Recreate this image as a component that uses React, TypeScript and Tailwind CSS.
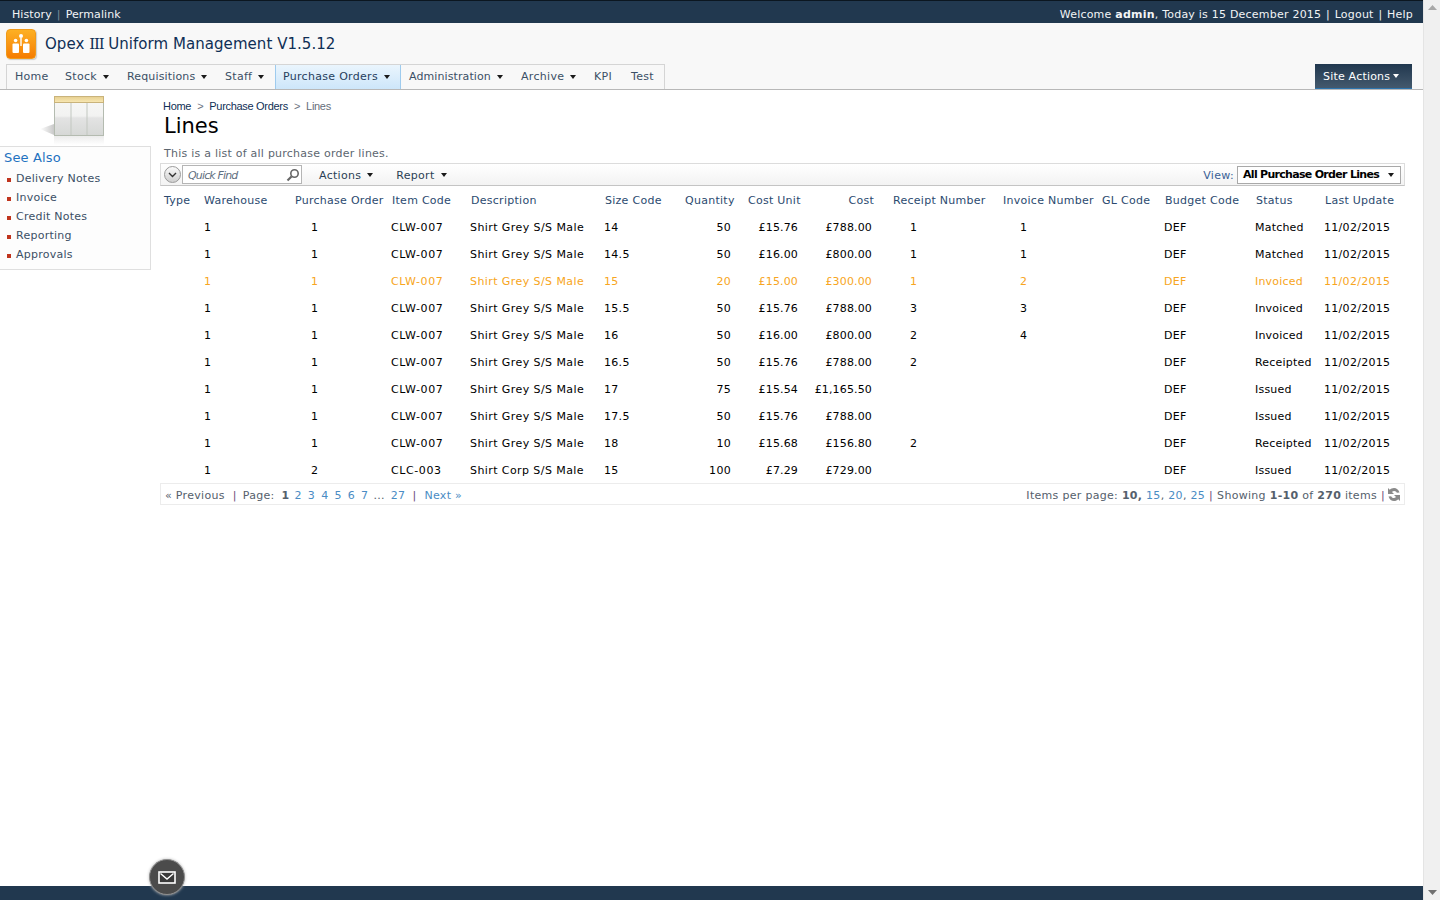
const navItems = [
  { label: 'Home', arrow: false, w: 'w-[50px]', t: '' },
  { label: 'Stock', arrow: true, w: 'w-[62px]', t: '' },
  { label: 'Requisitions', arrow: true, w: 'w-[98px]', t: 'tracking-[0.15px]' },
  { label: 'Staff', arrow: true, w: 'w-[58px]', t: '' },
  { label: 'Purchase Orders', arrow: true, w: 'w-[126px]', t: '', active: true },
  { label: 'Administration', arrow: true, w: 'w-[112px]', t: 'tracking-[0.1px]' },
  { label: 'Archive', arrow: true, w: 'w-[73px]', t: '' },
  { label: 'KPI', arrow: false, w: 'w-[37px]', t: '' },
  { label: 'Test', arrow: false, w: 'w-[41px]', t: '' },
];

const seeAlso = ['Delivery Notes', 'Invoice', 'Credit Notes', 'Reporting', 'Approvals'];

const headers = [
  'Type', 'Warehouse', 'Purchase Order', 'Item Code', 'Description', 'Size Code', 'Quantity', 'Cost Unit', 'Cost',
  'Receipt Number', 'Invoice Number', 'GL Code', 'Budget Code', 'Status', 'Last Update',
];

const rows = [
  ['1', '1', 'Shirt Grey S/S Male', 'CLW-007', '14', '50', '£15.76', '£788.00', '1', '1', 'Matched'],
  ['1', '1', 'Shirt Grey S/S Male', 'CLW-007', '14.5', '50', '£16.00', '£800.00', '1', '1', 'Matched'],
  ['1', '1', 'Shirt Grey S/S Male', 'CLW-007', '15', '20', '£15.00', '£300.00', '1', '2', 'Invoiced'],
  ['1', '1', 'Shirt Grey S/S Male', 'CLW-007', '15.5', '50', '£15.76', '£788.00', '3', '3', 'Invoiced'],
  ['1', '1', 'Shirt Grey S/S Male', 'CLW-007', '16', '50', '£16.00', '£800.00', '2', '4', 'Invoiced'],
  ['1', '1', 'Shirt Grey S/S Male', 'CLW-007', '16.5', '50', '£15.76', '£788.00', '2', '', 'Receipted'],
  ['1', '1', 'Shirt Grey S/S Male', 'CLW-007', '17', '75', '£15.54', '£1,165.50', '', '', 'Issued'],
  ['1', '1', 'Shirt Grey S/S Male', 'CLW-007', '17.5', '50', '£15.76', '£788.00', '', '', 'Issued'],
  ['1', '1', 'Shirt Grey S/S Male', 'CLW-007', '18', '10', '£15.68', '£156.80', '2', '', 'Receipted'],
  ['1', '2', 'Shirt Corp S/S Male', 'CLC-003', '15', '100', '£7.29', '£729.00', '', '', 'Issued'],
];

const colWidths = [40, 91, 97, 79, 134, 80, 63, 66, 79, 110, 99, 63, 91, 69, 84];

function Arrow() {
  return (
    <svg width="6" height="4" viewBox="0 0 6 4" className="ml-[6px] inline-block align-[2px]">
      <path d="M0 0h6L3 4z" fill="#1a1a1a" />
    </svg>
  );
}

function Logo() {
  return (
    <div className="w-[30px] h-[30px] rounded-[4px] bg-gradient-to-b from-[#fdb022] to-[#f57c00] border border-[#f09a1a] flex items-center justify-center shadow-[1px_1px_1px_#ccc]">
      <svg width="20" height="22" viewBox="0 0 20 22">
        <circle cx="10" cy="3" r="2" fill="#fff" />
        <circle cx="4.6" cy="7.5" r="1.8" fill="#fff" />
        <circle cx="15.4" cy="7.5" r="1.8" fill="#fff" />
        <rect x="9.3" y="5" width="1.4" height="8" fill="#fff" />
        <rect x="1.5" y="10.5" width="6.5" height="9.5" rx="1" fill="#fff" />
        <rect x="12" y="10.5" width="6.5" height="9.5" rx="1" fill="#fff" />
      </svg>
    </div>
  );
}

function ListIcon() {
  return (
    <svg width="68" height="50" viewBox="0 0 68 50">
      <defs>
        <linearGradient id="pane" x1="0" y1="0" x2="0" y2="1">
          <stop offset="0" stopColor="#f8f8f7" />
          <stop offset="0.5" stopColor="#f2f2f1" />
          <stop offset="0.55" stopColor="#e3e3e3" />
          <stop offset="1" stopColor="#d6d8d6" />
        </linearGradient>
        <linearGradient id="head" x1="0" y1="0" x2="0" y2="1">
          <stop offset="0" stopColor="#e6cf8f" />
          <stop offset="1" stopColor="#f9e8b4" />
        </linearGradient>
        <linearGradient id="cast" x1="1" y1="0" x2="0" y2="0">
          <stop offset="0" stopColor="#c9c9c9" />
          <stop offset="1" stopColor="#ffffff" />
        </linearGradient>
        <linearGradient id="mirror" x1="0" y1="0" x2="0" y2="1">
          <stop offset="0" stopColor="#ececec" />
          <stop offset="1" stopColor="#ffffff" />
        </linearGradient>
      </defs>
      <path d="M2 33 L16 28 V39 Z" fill="url(#cast)" />
      <rect x="16" y="40" width="50" height="9" fill="url(#mirror)" />
      <rect x="16.5" y="0.5" width="49" height="39" fill="url(#pane)" stroke="#b4bbb0" />
      <rect x="16.5" y="0.5" width="49" height="6" fill="url(#head)" stroke="#c9b37b" />
      <path d="M33 7V39M49 7V39" stroke="#c2c7c0" />
    </svg>
  );
}

export default function App() {
  return (
    <div className="h-screen w-full overflow-hidden flex bg-white text-[11px] tracking-[0.3px] text-black font-['DejaVu_Sans','Liberation_Sans',sans-serif]">
      <div className="relative flex-1 min-w-0 flex flex-col">
        {/* Top bar */}
        <div className="h-[23px] shrink-0 bg-[#21384f] border-t border-[#0b1620] flex items-center justify-between pt-[7px] pl-3 pr-[10px] text-[#f2f4f6]">
          <div className="flex items-center tracking-[0.1px]">
            <span>History</span>
            <span className="mx-[5px] text-[#7f8d9b]">|</span>
            <span>Permalink</span>
          </div>
          <div className="tracking-[0.22px]">
            Welcome <b>admin</b>, Today is 15 December 2015 <span className="mx-[1px]">|</span> Logout <span className="mx-[1px]">|</span> Help
          </div>
        </div>

        {/* Title */}
        <div className="h-[41px] shrink-0 bg-[#f8f8f8] flex items-center pl-[6px]">
          <Logo />
          <span className="ml-[9px] mt-[1px] text-[15px] tracking-[0.05px] text-[#0f2f55]">
            Opex <span className="font-['DejaVu_Serif',serif] tracking-[-1.2px]">III</span> Uniform Management V1.5.12
          </span>
        </div>

        {/* Nav */}
        <div className="h-[26px] shrink-0 bg-[#f8f8f8] border-b border-[#b8b8b8] pl-[6px] pr-[11px] flex items-end justify-between">
          <div className="flex h-[25px] border-l border-t border-r border-[#d5d5d5] bg-[#f8f8f8] text-[#3b4f65]">
            {navItems.map((item) => (
              <div
                key={item.label}
                className={`${item.w} ${item.t} shrink-0 flex items-center ${item.active ? 'pl-[7px] bg-gradient-to-b from-[#eaf5fd] to-[#cde6fa] border-x border-[#9ecbee] text-[#27405c]' : 'pl-2'}`}
              >
                {item.label}
                {item.arrow && <Arrow />}
              </div>
            ))}
          </div>
          <div className="w-[97px] h-[25px] pt-[2px] bg-gradient-to-b from-[#21384f] to-[#44596d] border-b border-[#2c74ad] text-white flex items-center pl-2 tracking-[0.2px]">
            Site Actions
            <svg width="6" height="4" viewBox="0 0 6 4" className="ml-[3px] mb-[3px]">
              <path d="M0 0h6L3 4z" fill="#ffffff" />
            </svg>
          </div>
        </div>

        {/* Body */}
        <div className="flex-1 min-h-0 flex">
          {/* Sidebar */}
          <div className="w-[151px] shrink-0">
            <div className="h-[56px] pl-[38px] pt-[6px]">
              <ListIcon />
            </div>
            <div className="h-[124px] border-t border-r border-b border-[#dfdfdf] bg-[#fdfdfd] pl-1 pt-[3px]">
              <div className="text-[13px] leading-[16px] tracking-[0.15px] text-[#1f72c0]">See Also</div>
              <ul className="mt-[4px] tracking-[0.25px]">
                {seeAlso.map((link) => (
                  <li key={link} className="h-[19px] flex items-center text-[#3b4f65]">
                    <span className="w-[4px] h-[4px] bg-[#c0341d] ml-[3px] mr-[5px]" />
                    {link}
                  </li>
                ))}
              </ul>
            </div>
          </div>

          {/* Content */}
          <div className="flex-1 min-w-0 pl-[9px] pr-[18px]">
            <div className="pl-[3px] pt-[8px] h-[16px] box-content flex items-center font-['Liberation_Sans',sans-serif] text-[#0f2f55] tracking-[-0.3px] text-[11px]">
              <span>Home</span>
              <span className="mx-[6px] text-[#6b7280]">&gt;</span>
              <span>Purchase Orders</span>
              <span className="mx-[6px] text-[#6b7280]">&gt;</span>
              <span className="text-[#666e7a]">Lines</span>
            </div>
            <div className="pl-[4px] text-[21px] tracking-normal leading-[24px] h-[24px]">Lines</div>
            <div className="pl-[4px] mt-[9px] h-[13px] leading-[13px] tracking-[0.24px] text-[#5c6670]">This is a list of all purchase order lines.</div>

            {/* Toolbar */}
            <div className="mt-[3px] h-[23px] border border-[#dcdcdc] border-b-[#c4c4c4] bg-gradient-to-b from-white to-[#f3f3f3] flex items-center pl-[3px] pr-[3px]">
              <div className="w-[17px] h-[17px] rounded-full border border-[#9a9a9a] bg-gradient-to-b from-[#fafafa] to-[#cfcfcf] flex items-center justify-center">
                <svg width="9" height="6" viewBox="0 0 9 6">
                  <path d="M1 1l3.5 3.5L8 1" fill="none" stroke="#333" strokeWidth="1.4" />
                </svg>
              </div>
              <div className="ml-[1px] w-[120px] h-[19px] bg-white border border-[#b5b5b5] flex items-center justify-between pl-[5px] pr-[1px] italic text-[#5f6f80] tracking-[-0.85px]">
                <span className="mt-[3px]">Quick Find</span>
                <svg width="14" height="14" viewBox="0 0 14 14">
                  <circle cx="8.5" cy="5.5" r="3.7" fill="#fff" stroke="#666" strokeWidth="1.6" />
                  <path d="M5.5 8.5L1.5 12.5" stroke="#666" strokeWidth="2.2" />
                </svg>
              </div>
              <span className="ml-[17px] mt-[3px] text-[#2b3f55]">Actions<Arrow /></span>
              <span className="ml-[23px] mt-[3px] text-[#2b3f55]">Report<Arrow /></span>
              <span className="ml-auto mt-[3px] text-[#3a5f96]">View:</span>
              <div className="ml-[3px] w-[164px] h-[18px] bg-white border border-[#a9a9a9] flex items-center justify-between pl-[5px] pr-[6px] font-bold tracking-[-0.7px] text-black">
                <span className="mt-[2px]">All Purchase Order Lines</span>
                <svg width="6" height="4" viewBox="0 0 6 4">
                  <path d="M0 0h6L3 4z" fill="#1a1a1a" />
                </svg>
              </div>
            </div>

            {/* Table */}
            <table className="table-fixed border-collapse w-[1245px]">
              <colgroup>
                {colWidths.map((w, i) => (
                  <col key={i} style={{ width: w }} />
                ))}
              </colgroup>
              <thead>
                <tr className="h-[27px] text-[#2b4a6f] tracking-[0.27px]">
                  {headers.map((h, i) => (
                    <th
                      key={h}
                      className={`font-normal whitespace-nowrap pt-[4px] ${i === 8 ? 'text-right pr-[15px]' : 'text-left pl-[4px]'}`}
                    >
                      {h}
                    </th>
                  ))}
                </tr>
              </thead>
              <tbody>
                {rows.map((r, idx) => (
                  <tr key={idx} className={`h-[27px] ${idx === 2 ? 'text-[#f7a521]' : 'text-black'}`}>
                    <td />
                    <td className="pl-[4px] pt-[3px]">{r[0]}</td>
                    <td className="pl-[20px] pt-[3px]">{r[1]}</td>
                    <td className="pl-[3px] pt-[3px] tracking-[0.6px]">{r[3]}</td>
                    <td className="pl-[3px] pt-[3px] tracking-[0.42px] whitespace-nowrap">{r[2]}</td>
                    <td className="pl-[3px] pt-[3px]">{r[4]}</td>
                    <td className="text-right pr-[13px] pt-[3px]">{r[5]}</td>
                    <td className="text-right pr-[12px] pt-[3px] tracking-[0.15px]">{r[6]}</td>
                    <td className="text-right pr-[17px] pt-[3px] tracking-[0.15px] whitespace-nowrap">{r[7]}</td>
                    <td className="pl-[21px] pt-[3px]">{r[8]}</td>
                    <td className="pl-[21px] pt-[3px]">{r[9]}</td>
                    <td />
                    <td className="pl-[3px] pt-[3px]">DEF</td>
                    <td className="pl-[3px] pt-[3px] tracking-[0.2px] whitespace-nowrap">{r[10]}</td>
                    <td className="pl-[3px] pt-[3px]">11/02/2015</td>
                  </tr>
                ))}
              </tbody>
            </table>

            {/* Pager */}
            <div className="h-[22px] pt-[4px] border border-[#ececec] flex items-center justify-between pl-[4px] pr-[3px] text-[#55606c]">
              <div className="flex items-center whitespace-pre">
                <span>« Previous</span>
                <span className="ml-[8px] mr-[6px] text-[#6b4a7a]">|</span>
                <span>Page:</span>
                <b className="ml-[7px]">1</b>
                <span className="ml-[5px] text-[#4a8cc4]">2</span>
                <span className="ml-[6px] text-[#4a8cc4]">3</span>
                <span className="ml-[6px] text-[#4a8cc4]">4</span>
                <span className="ml-[6px] text-[#4a8cc4]">5</span>
                <span className="ml-[6px] text-[#4a8cc4]">6</span>
                <span className="ml-[6px] text-[#4a8cc4]">7</span>
                <span className="ml-[5px]">...</span>
                <span className="ml-[6px] text-[#4a8cc4]">27</span>
                <span className="ml-[7px] mr-[8px] text-[#6b4a7a]">|</span>
                <span className="text-[#4a8cc4]">Next »</span>
              </div>
              <div className="flex items-center whitespace-pre">
                <span>Items per page: </span>
                <b>10,</b>
                <span> </span>
                <span className="text-[#4a8cc4]">15</span>,<span> </span>
                <span className="text-[#4a8cc4]">20</span>,<span> </span>
                <span className="text-[#4a8cc4]">25</span>
                <span className="mx-[4px] text-[#6b4a7a]">|</span>
                <span>Showing </span>
                <b>1-10</b>
                <span> of </span>
                <b>270</b>
                <span> items</span>
                <span className="ml-[4px] mr-[2px] text-[#6b4a7a]">|</span>
                <svg width="14" height="17" viewBox="0 0 14 17" className="mt-[-4px]">
                  <path d="M12.5 6.5C11.5 3.5 9.5 2 7 2 5.2 2 3.8 2.8 2.8 3.8L1 2v6h6L5 6C5.6 5.3 6.3 5 7.2 5c1.3 0 2.2.7 2.6 1.8z" fill="#8a8a8a" />
                  <path d="M1.5 10.5C2.5 13.5 4.5 15 7 15c1.8 0 3.2-.8 4.2-1.8L13 15V9H7l2 2c-.6.7-1.3 1-2.2 1-1.3 0-2.2-.7-2.6-1.8z" fill="#8a8a8a" />
                </svg>
              </div>
            </div>
          </div>
        </div>

        {/* Footer */}
        <div className="h-[14px] shrink-0 bg-[#21384f]" />

        {/* Mail button */}
        <div className="absolute left-[149px] top-[859px] w-[36px] h-[36px] rounded-full bg-[#4b4b4b] border border-[#8f8f8f] shadow-[0_0_3px_#bbb] flex items-center justify-center">
          <svg width="18" height="13" viewBox="0 0 18 13">
            <rect x="1" y="1" width="16" height="11" fill="#3a3a3a" stroke="#fff" strokeWidth="1.6" />
            <path d="M2.5 2.5L9 8l6.5-5.5" fill="none" stroke="#fff" strokeWidth="1.4" />
          </svg>
        </div>
      </div>

      {/* Scrollbar */}
      <div className="w-[17px] shrink-0 bg-[#f0f0f0] border-l border-[#e4e4e4] flex flex-col items-center justify-between py-[5px]">
        <svg width="9" height="5" viewBox="0 0 9 5">
          <path d="M0 5L4.5 0 9 5z" fill="#a8a8a8" />
        </svg>
        <svg width="9" height="5" viewBox="0 0 9 5">
          <path d="M0 0h9L4.5 5z" fill="#707070" />
        </svg>
      </div>
    </div>
  );
}
